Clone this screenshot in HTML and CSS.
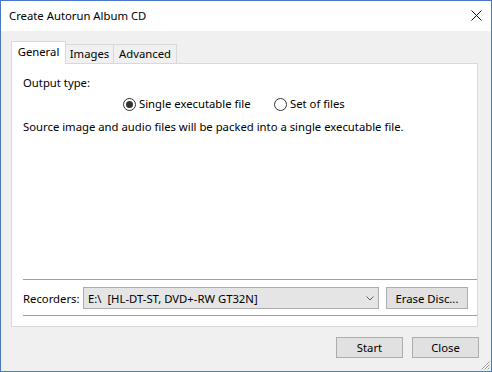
FILE: index.html
```html
<!DOCTYPE html>
<html lang="en">

<head>
    <meta charset="UTF-8">
    <title>Create Autorun Album CD</title>
    <link rel="stylesheet" href="styles.css">
</head>

<body>

    <div class="window">
        <div class="titlebar">
            <span class="title">Create Autorun Album CD</span>
            <svg class="close-x" width="11" height="11" viewBox="0 0 11 11">
                <path d="M0.5 0.5 L10.5 10.5 M10.5 0.5 L0.5 10.5" stroke="#111" stroke-width="1" fill="none"/>
            </svg>
        </div>

        <div class="content">
            <!-- Pestañas -->
            <div class="tabs">
                <div class="tab active">General</div>
                <div class="tab images">Images</div>
                <div class="tab advanced">Advanced</div>
            </div>

            <div class="panel">
                <div class="label">Output type:</div>
                <div class="radio-row">
                    <label class="radio first"><span class="dot checked"></span>Single executable file</label>
                    <label class="radio"><span class="dot"></span>Set of files</label>
                </div>
                <div class="desc">Source image and audio files will be packed into a single executable file.</div>

                <div class="spacer"></div>

                <div class="separator"></div>
                <div class="recorder-row">
                    <span class="rec-label">Recorders:</span>
                    <div class="combo">
                        <span>E:\&nbsp; [HL-DT-ST, DVD+-RW GT32N]</span>
                        <svg class="chevron" width="8" height="5" viewBox="0 0 8 5">
                            <path d="M0.5 0.5 L4 4 L7.5 0.5" stroke="#606060" stroke-width="1" fill="none"/>
                        </svg>
                    </div>
                    <button class="btn erase">Erase Disc...</button>
                </div>
                <div class="separator"></div>
            </div>

            <div class="footer">
                <button class="btn wide">Start</button>
                <button class="btn wide">Close</button>
            </div>
        </div>

        <svg class="grip" width="9" height="9" viewBox="0 0 9 9">
            <path d="M8.5 0.5 L0.5 8.5 M8.5 3.5 L3.5 8.5 M8.5 6.5 L6.5 8.5" stroke="#a0a0a0" stroke-width="1" fill="none"/>
        </svg>
    </div>

</body>

</html>
```

FILE: styles.css
```css
body {
    margin: 0;
    font-family: "Noto Sans", Arial, sans-serif;
    font-size: 11.3px;
    color: #000;
}

.window {
    position: relative;
    width: 492px;
    height: 372px;
    box-sizing: border-box;
    border: 1px solid #4a78c8;
    background-color: #f0f0f0;
    display: flex;
    flex-direction: column;
}

.titlebar {
    height: 30px;
    background-color: #ffffff;
    display: flex;
    align-items: center;
    padding-left: 8px;
    padding-right: 9px;
}

.title {
    flex: 1;
    margin-top: -1px;
}

.close-x {
    margin-top: -1px;
}

.content {
    flex: 1;
    padding: 10px 13px 0 10px;
    display: flex;
    flex-direction: column;
}

.tabs {
    display: flex;
    align-items: flex-end;
    height: 22px;
}

.tab {
    height: 19px;
    box-sizing: border-box;
    border: 1px solid #d9d9d9;
    border-bottom: none;
    border-left: none;
    line-height: 18px;
    text-align: center;
    background-color: #f0f0f0;
}

.tab.active {
    width: 55px;
    height: 23px;
    margin-bottom: -1px;
    border-left: 1px solid #d9d9d9;
    background-color: #ffffff;
    line-height: 19px;
    position: relative;
    z-index: 1;
}

.tab.images {
    width: 48px;
}

.tab.advanced {
    width: 63px;
}

.panel {
    height: 264px;
    box-sizing: border-box;
    background-color: #ffffff;
    border: 1px solid #d9d9d9;
    padding: 11px 0 10px 11px;
    display: flex;
    flex-direction: column;
}

.label,
.desc {
    line-height: 16px;
}

.radio-row {
    display: flex;
    margin-top: 5px;
    padding-left: 100px;
    line-height: 16px;
}

.radio {
    display: flex;
    align-items: center;
}

.radio.first {
    width: 151px;
}

.dot {
    width: 11px;
    height: 11px;
    border: 1px solid #333;
    border-radius: 50%;
    margin-right: 3px;
    display: flex;
    align-items: center;
    justify-content: center;
}

.dot.checked::after {
    content: "";
    width: 7px;
    height: 7px;
    border-radius: 50%;
    background-color: #333;
}

.desc {
    margin-top: 7px;
}

.spacer {
    flex: 1;
}

.separator {
    height: 1px;
    background-color: #a0a0a0;
}

.recorder-row {
    display: flex;
    align-items: center;
    height: 22px;
    margin: 7px 9px 6px 0;
}

.rec-label {
    width: 60px;
    flex-shrink: 0;
    white-space: nowrap;
}

.combo {
    width: 296px;
    height: 22px;
    flex-shrink: 0;
    box-sizing: border-box;
    background-color: #e5e5e5;
    border: 1px solid #adadad;
    display: flex;
    align-items: center;
    padding: 0 4px 0 4px;
}

.combo span {
    flex: 1;
}

.btn {
    font-family: "Noto Sans", Arial, sans-serif;
    font-size: 11.3px;
    background-color: #e1e1e1;
    border: 1px solid #adadad;
    padding: 0;
    color: #000;
}

.erase {
    margin-left: 7px;
    width: 82px;
    height: 22px;
}

.footer {
    display: flex;
    justify-content: flex-end;
    gap: 9px;
    margin-top: 10px;
    margin-right: -1px;
}

.wide {
    width: 67px;
    height: 21px;
}

.grip {
    position: absolute;
    right: 1px;
    bottom: 1px;
}
```
